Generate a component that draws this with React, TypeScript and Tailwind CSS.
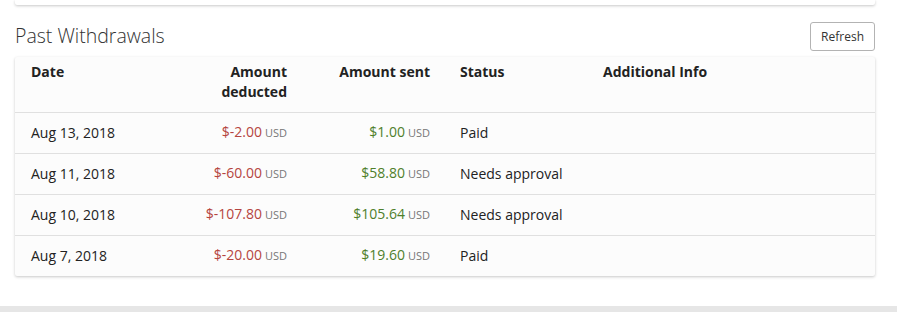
const rows = [
  { date: "Aug 13, 2018", deducted: "$-2.00", sent: "$1.00", status: "Paid" },
  { date: "Aug 11, 2018", deducted: "$-60.00", sent: "$58.80", status: "Needs approval" },
  { date: "Aug 10, 2018", deducted: "$-107.80", sent: "$105.64", status: "Needs approval" },
  { date: "Aug 7, 2018", deducted: "$-20.00", sent: "$19.60", status: "Paid" },
];

function Usd() {
  return <span className="ml-[3px] text-[11px] text-[#777]">USD</span>;
}

export default function App() {
  return (
    <div
      className="w-[897px] h-[312px] bg-white flex flex-col overflow-hidden text-[#222]"
      style={{ fontFamily: '"Open Sans", sans-serif' }}
    >
      <div className="pl-[15px] pr-[22px] flex-1">
        {/* previous card edge */}
        <div className="h-[5px] bg-white rounded-b-[2px] shadow-[0_1px_3px_rgba(0,0,0,0.22)]" />

        <div className="mt-[17px] flex items-center justify-between h-[29px]">
          <h2 className="text-[19.5px] font-light text-[#333] leading-none -mt-[2px]">Past Withdrawals</h2>
          <button className="h-[29px] px-[10px] text-[12px] text-[#333] bg-white border border-[#b3b3b3] rounded-[3px]">
            Refresh
          </button>
        </div>

        <div className="mt-[6px] bg-[#fcfcfc] rounded-[2px] shadow-[0_1px_3px_rgba(0,0,0,0.22)]">
          <table className="w-full table-fixed border-collapse text-[14px] leading-[20px]">
            <colgroup>
              <col className="w-[145px]" />
              <col className="w-[143px]" />
              <col className="w-[143px]" />
              <col className="w-[143px]" />
              <col />
            </colgroup>
            <thead>
              <tr className="border-b border-[#e0e0e0] align-top font-bold text-[#222]">
                <th className="pl-4 pt-[5px] pb-[10px] text-left">Date</th>
                <th className="pr-4 pt-[5px] pb-[10px] text-right">
                  Amount
                  <br />
                  deducted
                </th>
                <th className="pr-4 pt-[5px] pb-[10px] text-right">Amount sent</th>
                <th className="pl-[14px] pt-[5px] pb-[10px] text-left">Status</th>
                <th className="pl-[14px] pt-[5px] pb-[10px] text-left">Additional Info</th>
              </tr>
            </thead>
            <tbody>
              {rows.map((r, i) => (
                <tr key={r.date} className={i < rows.length - 1 ? "border-b border-[#e0e0e0]" : ""}>
                  <td className="pl-4 pt-[9px] pb-[10px]">{r.date}</td>
                  <td className="pr-4 pt-[9px] pb-[10px] text-right">
                    <span className="text-[#b5453f]">{r.deducted}</span>
                    <Usd />
                  </td>
                  <td className="pr-4 pt-[9px] pb-[10px] text-right">
                    <span className="text-[#4f7f2b]">{r.sent}</span>
                    <Usd />
                  </td>
                  <td className="pl-[14px] pt-[9px] pb-[10px]">{r.status}</td>
                  <td className="pl-[14px] pt-[9px] pb-[10px]"></td>
                </tr>
              ))}
            </tbody>
          </table>
        </div>
      </div>
      <div className="h-[6px] bg-[#e6e6e6]" />
    </div>
  );
}
